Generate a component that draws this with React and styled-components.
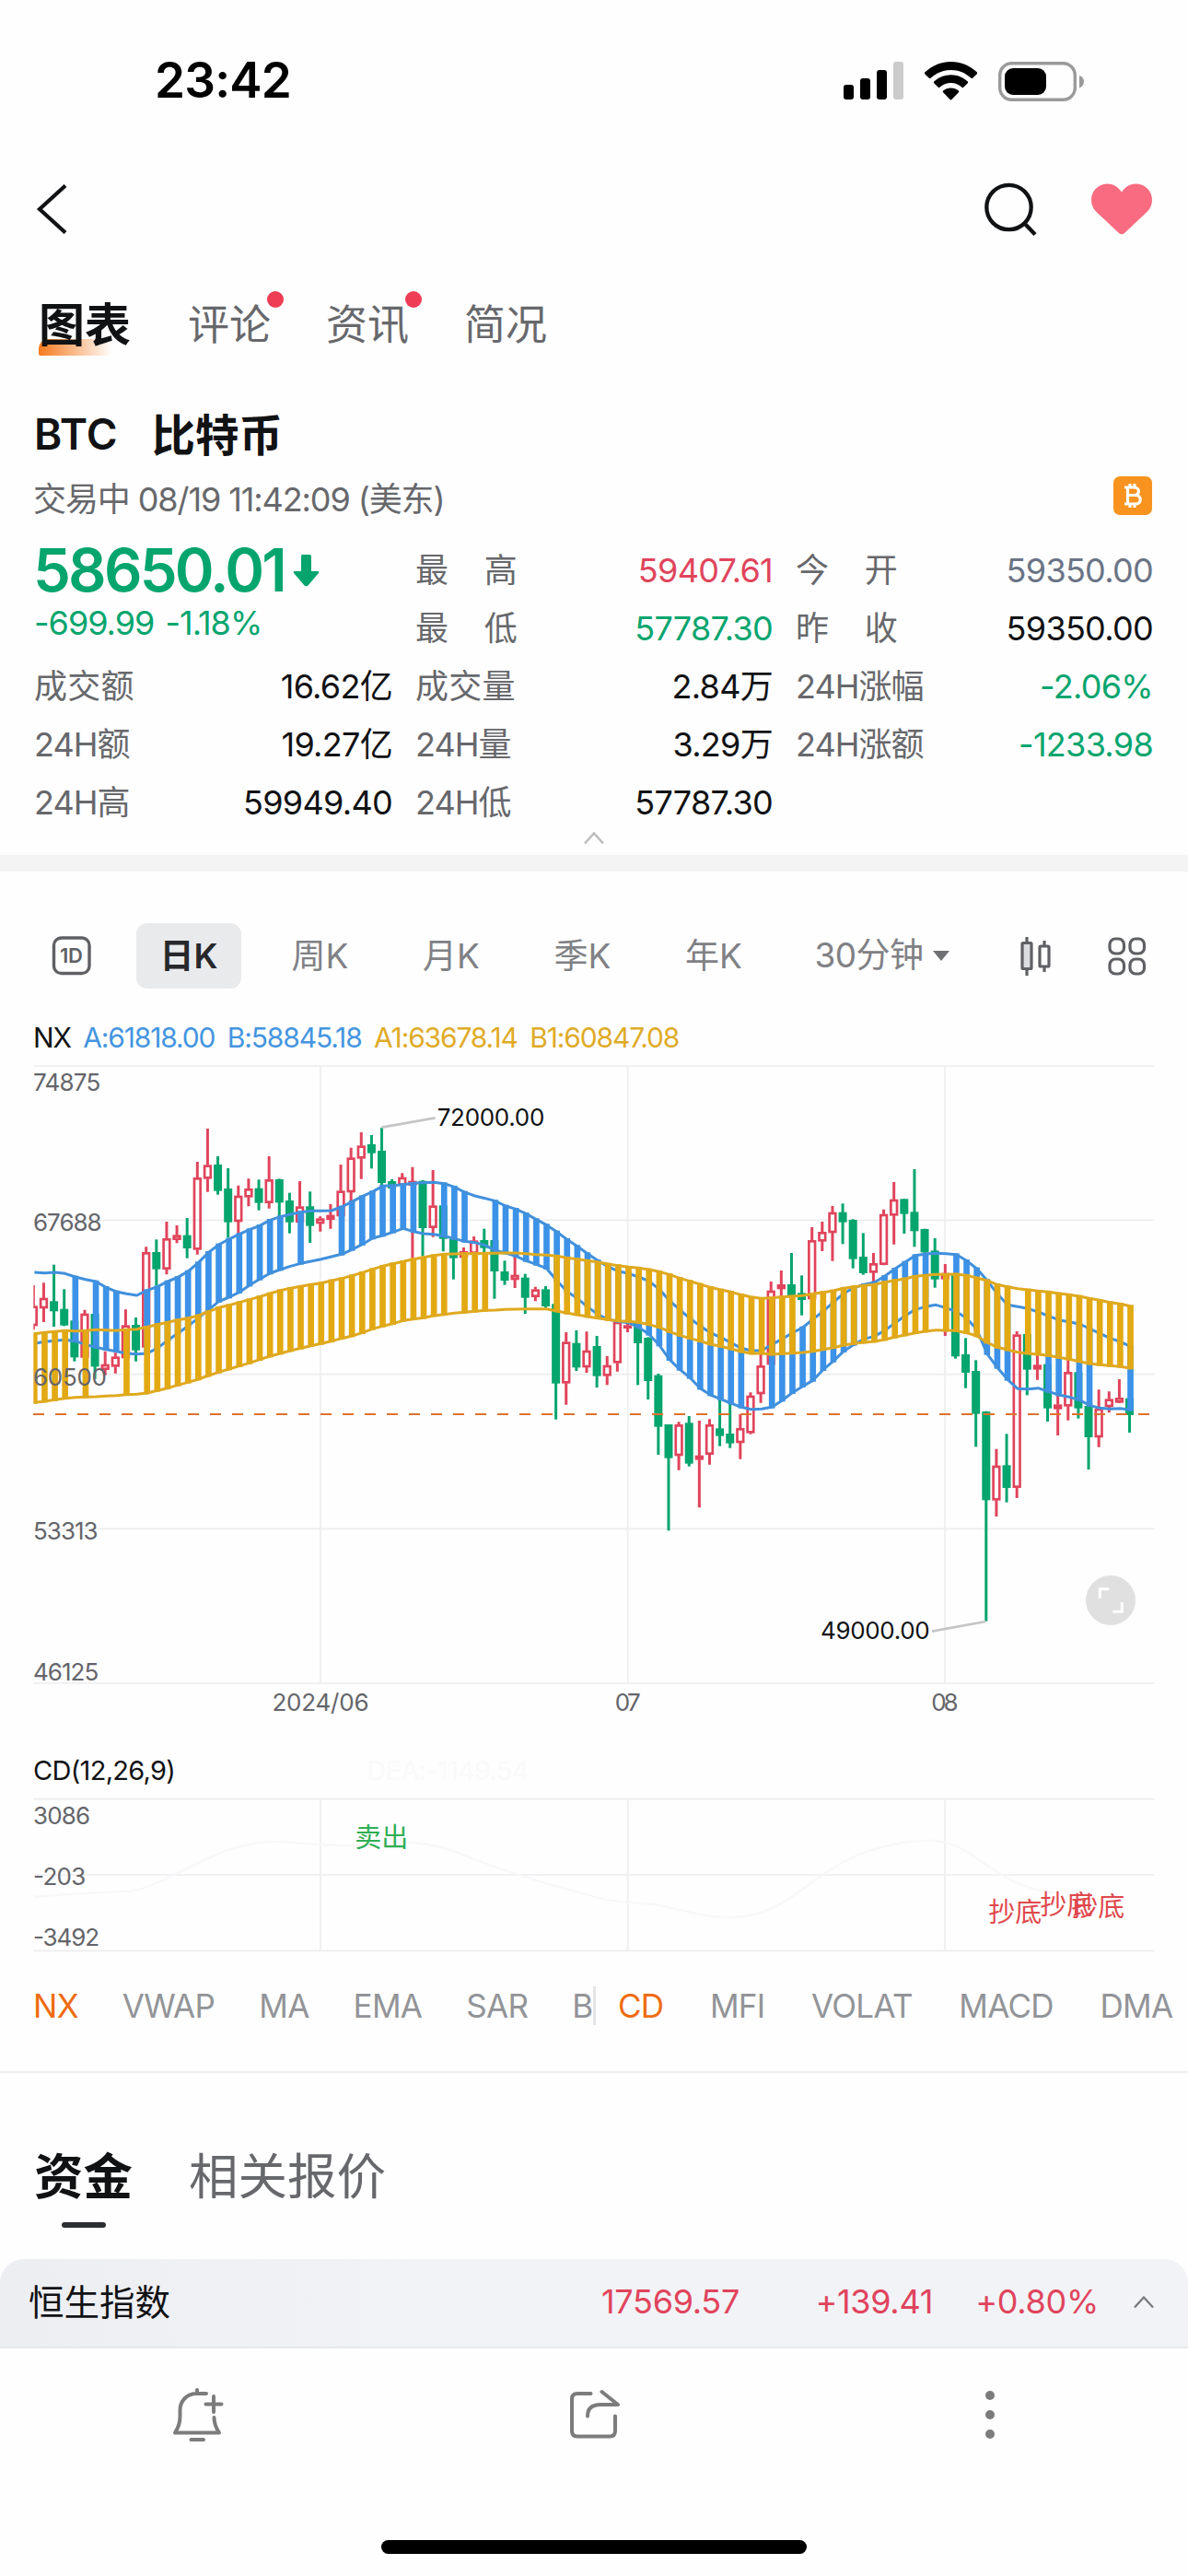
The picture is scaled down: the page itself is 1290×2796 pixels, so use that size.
import React from 'react'
import styled, {createGlobalStyle} from 'styled-components'

const RED = '#e0445c'
const GREEN = '#06a56e'
const BLUE = '#3b92e8'
const GOLD = '#e2a912'

const GlobalStyle = createGlobalStyle`
  body {
    margin: 0;
    background: #fefefe;
    color: #111214;
    font-family: Inter, "Noto Sans CJK SC", sans-serif;
    line-height: 1.2;
    -webkit-font-smoothing: antialiased;
  }
  svg { display: block; }
`

const Screen = styled.div`
  width: 1290px;
  height: 2796px;
  overflow: hidden;
  display: flex;
  flex-direction: column;
`

const StatusBar = styled.div`
  height: 176px;
  box-sizing: border-box;
  padding: 0 113px 0 168px;
  display: flex;
  align-items: center;
  justify-content: space-between;
`

const Clock = styled.span`
  font-size: 53px;
  font-weight: 600;
  letter-spacing: -0.8px;
  color: #000;
`

const StatusIcons = styled.div`
  display: flex;
  align-items: center;
  gap: 23px;
`

const NavBar = styled.div`
  height: 102px;
  padding: 0 39px 0 37px;
  display: flex;
  align-items: center;
  justify-content: space-between;
`

const NavActions = styled.div`
  display: flex;
  align-items: center;
  gap: 56px;
`

const PageTabs = styled.div`
  height: 150px;
  padding-left: 42px;
  display: flex;
  align-items: center;
  gap: 60px;
`

const PageTab = styled.div`
  position: relative;
  font-size: ${p => p.$active ? 50 : 45}px;
  font-weight: ${p => p.$active ? 700 : 400};
  line-height: 60px;
  color: ${p => p.$active ? '#111214' : '#67686c'};
  margin-right: ${p => p.$active ? 2 : 0}px;
`

const TabGlow = styled.i`
  position: absolute;
  left: 0;
  bottom: -3px;
  width: 80px;
  height: 18px;
  border-radius: 10px 0 0 2px;
  background: linear-gradient(90deg, #f57a1e, rgba(245, 122, 30, .45) 55%, rgba(245, 122, 30, 0));
`

const TabText = styled.span`
  position: relative;
`

const Dot = styled.i`
  position: absolute;
  top: -7px;
  right: -14px;
  width: 18px;
  height: 18px;
  border-radius: 50%;
  background: #ef3d55;
`

const TitleRow = styled.div`
  height: 88px;
  padding-left: 37px;
  display: flex;
  align-items: center;
  gap: 37px;
  font-size: 46px;
  font-weight: 600;
`

const CoinName = styled.span`
  font-size: 47.5px;
`

const SessionRow = styled.div`
  height: 54px;
  padding: 0 39px 0 36px;
  display: flex;
  align-items: center;
  justify-content: space-between;
  font-size: 36px;
  letter-spacing: -1.1px;
  color: #67686c;

  svg { margin-bottom: 10px; }
`

const Quote = styled.div`
  padding: 18px 37px 0 37px;
  display: grid;
  grid-template-columns: 389px 388px 388px;
  grid-auto-rows: 63px;
  column-gap: 25px;
`

const LastPrice = styled.div`
  grid-row: span 2;
`

const Price = styled.div`
  margin-left: -1px;
  display: flex;
  align-items: center;
  gap: 9px;
  line-height: 62px;
  font-size: 65px;
  font-weight: 600;
  letter-spacing: -2.8px;
  color: ${GREEN};
`

const Change = styled.div`
  line-height: 53px;
  font-size: 36px;
  letter-spacing: -1px;
  word-spacing: 3px;
  color: ${GREEN};
`

const Stat = styled.div`
  display: flex;
  align-items: center;
  justify-content: space-between;
  font-size: 36px;
`

const StatLabel = styled.span`
  display: flex;
  justify-content: space-between;
  min-width: ${p => p.$spread ? '111px' : '0'};
  letter-spacing: ${p => p.$latin ? '-1px' : '0.3px'};
  color: #67686c;
`

const StatValue = styled.span`
  letter-spacing: -0.7px;
  color: ${p => p.$color || '#111214'};
`

const Fold = styled.div`
  height: 25px;
  display: flex;
  justify-content: center;
`

const Band = styled.div`
  height: 18px;
  background: #f4f4f5;
`

const PeriodBar = styled.div`
  margin-top: 56px;
  height: 71px;
  padding: 0 45px 0 56px;
  display: flex;
  align-items: center;
`

const Periods = styled.div`
  flex: 1;
  margin-left: 49px;
  display: flex;
  gap: 28.5px;
`

const Period = styled.div`
  width: 114px;
  height: 71px;
  line-height: 71px;
  border-radius: 12px;
  text-align: center;
  font-size: 37px;
  font-weight: ${p => p.$active ? 600 : 400};
  color: ${p => p.$active ? '#27282b' : '#808185'};
  background: ${p => p.$active ? '#e9eaec' : 'transparent'};
`

const MinutePicker = styled.div`
  margin-left: 24px;
  display: flex;
  align-items: center;
  gap: 11px;
  font-size: 37px;
  letter-spacing: -0.6px;
  color: #808185;
`

const PeriodTools = styled.div`
  display: flex;
  align-items: center;
  gap: 60px;
`

const Legend = styled.div`
  margin: 33px 0 4px;
  padding-left: 36px;
  height: 40px;
  line-height: 40px;
  display: flex;
  gap: 13.5px;
  font-size: 30px;
  letter-spacing: -1.15px;
`

const LegendItem = styled.span`
  color: ${p => p.$color || '#111214'};
`

const SubLegend = styled.div`
  margin-top: 32px;
  padding-left: 36px;
  height: 40px;
  line-height: 40px;
  display: flex;
  gap: 208px;
  font-size: 29px;
  letter-spacing: -0.7px;
`

const Indicators = styled.div`
  height: 110px;
  padding-bottom: 16px;
  border-bottom: 2px solid #efeff0;
  display: flex;
  align-items: center;
`

const IndicatorList = styled.div`
  width: ${p => p.$width}px;
  box-sizing: border-box;
  padding-left: ${p => p.$pad}px;
  display: flex;
  flex: none;
  gap: ${p => p.$gap}px;
  overflow: hidden;
  line-height: 42px;
  font-size: 35px;
`

const Indicator = styled.span`
  flex: none;
  letter-spacing: -0.7px;
  color: ${p => p.$active ? '#ee6c12' : '#929498'};
`

const Divider = styled.i`
  width: 3px;
  height: 42px;
  background: #e4e4e6;
`

const FundTabs = styled.div`
  height: 125px;
  padding: 77px 0 0 37px;
  display: flex;
  gap: 61px;
`

const FundTab = styled.div`
  display: flex;
  flex-direction: column;
  align-items: center;
  line-height: 72px;
  font-size: 53.5px;
  font-weight: ${p => p.$active ? 700 : 400};
  color: ${p => p.$active ? '#111214' : '#67686c'};
`

const Underline = styled.i`
  margin-top: 13px;
  width: 48px;
  height: 6px;
  border-radius: 3px;
  background: #2d2e31;
`

const Ticker = styled.div`
  height: 97px;
  box-sizing: border-box;
  padding: 0 37px 0 31px;
  display: flex;
  align-items: center;
  border-bottom: 2px solid #e8e9ea;
  border-radius: 26px 26px 0 0;
  background: linear-gradient(90deg, #eceef2, #f2f3f7 35%);
  font-size: 38.5px;
`

const TickerName = styled.span`
  flex: 1;
`

const TickerValue = styled.span`
  width: ${p => p.$width}px;
  padding-bottom: 1px;
  text-align: right;
  font-size: 36px;
  letter-spacing: -0.3px;
  color: ${RED};

  & + svg { margin-left: 38px; }
`

const ActionBar = styled.div`
  height: 144px;
  display: grid;
  grid-template-columns: repeat(3, 1fr);
  align-items: center;
  justify-items: center;
`

const HomeIndicator = styled.div`
  margin: 64px auto 0;
  width: 462px;
  height: 15px;
  border-radius: 8px;
  background: #000;
`

// chart space is three units per pixel
const STEP = 33.37
const candleX = i => 109 + STEP * i

// [rising, high, body top, body bottom, low]
const candles = [
    [1, 735, 803, 867, 880], [1, 727, 777, 810, 855], [0, 668, 787, 820, 870], [0, 748, 812, 866, 868],
    [0, 850, 850, 970, 983], [1, 815, 828, 970, 972], [0, 828, 828, 1000, 1040], [1, 950, 993, 1010, 1028],
    [1, 955, 968, 1000, 1022], [1, 814, 866, 972, 975], [0, 840, 864, 947, 983], [1, 610, 628, 937, 940],
    [0, 586, 627, 683, 735], [1, 528, 583, 683, 700], [1, 540, 572, 587, 598], [0, 516, 572, 615, 647],
    [1, 333, 385, 619, 635], [1, 225, 344, 388, 431], [0, 315, 342, 428, 440], [0, 354, 420, 530, 580],
    [1, 410, 444, 528, 570], [1, 388, 421, 448, 478], [0, 391, 419, 467, 491], [1, 315, 391, 467, 485],
    [0, 388, 390, 466, 510], [0, 434, 459, 530, 566], [1, 396, 479, 530, 532], [0, 430, 478, 542, 597],
    [1, 511, 518, 534, 560], [1, 471, 507, 521, 551], [1, 342, 428, 510, 512], [1, 287, 320, 432, 465],
    [1, 237, 281, 322, 389], [0, 246, 276, 305, 355], [0, 222, 297, 402, 410], [0, 390, 396, 420, 422],
    [1, 370, 384, 410, 412], [1, 350, 396, 410, 650], [0, 393, 395, 549, 640], [1, 360, 476, 548, 578],
    [0, 474, 475, 584, 625], [0, 580, 585, 647, 716], [1, 612, 625, 645, 648], [1, 576, 590, 632, 634],
    [0, 551, 588, 614, 630], [0, 588, 588, 690, 779], [0, 655, 690, 720, 734], [1, 640, 702, 717, 744],
    [0, 698, 710, 776, 828], [1, 740, 749, 773, 787], [0, 738, 748, 804, 808], [0, 795, 796, 1055, 1172],
    [1, 888, 920, 1054, 1124], [0, 882, 923, 1003, 1014], [1, 886, 948, 1002, 1020], [0, 900, 933, 1031, 1068],
    [1, 966, 996, 1030, 1060], [1, 850, 855, 988, 1016], [1, 856, 866, 872, 888], [0, 856, 858, 924, 1060],
    [0, 904, 906, 1047, 1107], [0, 1023, 1028, 1196, 1287], [0, 1188, 1188, 1298, 1534], [1, 1180, 1189, 1290, 1337],
    [0, 1161, 1183, 1316, 1325], [1, 1176, 1290, 1303, 1459], [1, 1171, 1189, 1286, 1319], [0, 1105, 1201, 1226, 1259],
    [0, 1120, 1218, 1250, 1265], [1, 1155, 1201, 1248, 1301], [1, 1084, 1095, 1216, 1220], [1, 955, 997, 1089, 1118],
    [1, 723, 753, 993, 995], [1, 687, 733, 747, 770], [0, 630, 732, 770, 772], [0, 703, 760, 783, 833],
    [1, 546, 589, 780, 782], [1, 528, 562, 592, 624], [1, 477, 498, 564, 656], [0, 469, 497, 530, 601],
    [0, 520, 522, 650, 680], [0, 565, 642, 696, 701], [1, 630, 664, 694, 725], [1, 488, 504, 668, 670],
    [1, 399, 456, 508, 602], [0, 454, 454, 503, 567], [0, 357, 496, 559, 610], [0, 551, 552, 628, 630],
    [0, 582, 622, 716, 743], [1, 666, 696, 715, 900], [0, 696, 696, 967, 974], [0, 907, 960, 1020, 1070],
    [0, 979, 1014, 1154, 1261], [0, 1145, 1146, 1435, 1829], [1, 1268, 1323, 1435, 1488], [0, 1219, 1321, 1395, 1442],
    [1, 885, 896, 1394, 1428], [0, 894, 894, 1010, 1093], [1, 961, 995, 1009, 1043], [0, 992, 992, 1136, 1179],
    [1, 1089, 1124, 1138, 1224], [1, 974, 1018, 1129, 1175], [0, 1018, 1018, 1136, 1169], [0, 1127, 1128, 1230, 1335],
    [1, 1075, 1137, 1230, 1262], [1, 1081, 1106, 1131, 1150], [1, 1041, 1102, 1117, 1119], [0, 1103, 1103, 1158, 1215],
]

const blueBand = {
    upper: [693, 695, 693, 697, 708, 716, 723, 742, 756, 763, 768, 752, 740, 723, 709, 690, 662, 628, 603, 585,
        569, 554, 541, 523, 512, 504, 497, 493, 493, 492, 480, 463, 446, 431, 412, 410, 407, 403, 401, 400,
        404, 415, 432, 444, 452, 461, 477, 487, 502, 521, 539, 561, 586, 608, 632, 655, 675, 689, 697, 708,
        722, 748, 785, 815, 843, 868, 890, 905, 922, 940, 948, 948, 928, 910, 890, 873, 846, 820, 790, 762,
        743, 733, 726, 706, 682, 660, 638, 633, 631, 632, 635, 655, 681, 719, 763, 799, 805, 811, 822, 835,
        848, 854, 861, 876, 892, 907, 919, 934],
    lower: [925, 919, 916, 913, 917, 928, 937, 944, 950, 957, 959, 957, 940, 915, 892, 868, 842, 815, 788, 774,
        758, 735, 715, 696, 684, 673, 664, 657, 650, 642, 634, 619, 602, 582, 573, 562, 550, 560, 567, 569,
        575, 583, 592, 596, 605, 622, 630, 640, 655, 667, 680, 720, 755, 778, 805, 830, 846, 853, 857, 872,
        895, 930, 977, 1009, 1036, 1071, 1092, 1106, 1119, 1132, 1139, 1138, 1132, 1110, 1085, 1064, 1045, 1010, 982, 950,
        928, 910, 901, 883, 858, 835, 814, 805, 799, 809, 821, 842, 879, 958, 1003, 1042, 1072, 1073, 1070, 1081,
        1092, 1099, 1108, 1126, 1135, 1138, 1136, 1141],
    gaps: [0, 1, 2, 3, 5, 9, 10, 25, 27, 28, 29, 38, 39, 43, 44, 70, 71, 88, 89, 96, 97, 98, 101, 104, 105, 106],
}

const goldBand = {
    upper: [893, 889, 886, 883, 884, 883, 880, 881, 883, 880, 878, 871, 863, 856, 848, 842, 834, 821, 808, 800,
        791, 782, 772, 762, 752, 745, 739, 733, 728, 720, 713, 704, 694, 683, 673, 665, 658, 650, 644, 638,
        634, 633, 632, 632, 631, 631, 630, 630, 632, 635, 637, 640, 646, 650, 655, 660, 666, 671, 676, 679,
        684, 691, 700, 712, 722, 732, 742, 750, 757, 766, 774, 778, 776, 773, 771, 769, 763, 758, 753, 745,
        740, 736, 733, 725, 719, 714, 706, 703, 700, 700, 699, 703, 711, 720, 733, 740, 746, 750, 754, 757,
        762, 766, 771, 778, 784, 791, 796, 803],
    lower: [1117, 1113, 1108, 1103, 1100, 1099, 1098, 1096, 1094, 1091, 1090, 1086, 1078, 1070, 1060, 1051, 1041, 1029, 1018, 1008,
        998, 988, 977, 966, 957, 948, 940, 932, 925, 917, 908, 900, 890, 877, 868, 860, 850, 845, 841, 834,
        830, 826, 823, 820, 817, 816, 814, 813, 812, 812, 812, 819, 826, 831, 837, 842, 847, 851, 853, 856,
        863, 872, 886, 898, 908, 917, 927, 934, 942, 951, 957, 957, 960, 958, 956, 954, 950, 944, 938, 930,
        925, 921, 918, 912, 904, 897, 890, 885, 881, 882, 883, 890, 900, 921, 937, 945, 953, 957, 960, 964,
        970, 976, 983, 990, 994, 997, 1000, 1005],
    gaps: [4, 6, 7, 8, 10, 41, 45, 46, 47, 48, 49, 50, 75, 88, 96],
}

const MONTHS = [[1044, '2024/06', 315], [2045, '07', 84], [3078, '08', 88]]

const toPoints = ys => ys.map((y, i) => `${candleX(i) + 3},${y}`).join(' ')

const Ribbon = ({band, fill, line}) => (
    <g>
        {band.upper.map((y, i) => !band.gaps.includes(i) && (
            <rect key={i} x={candleX(i) - 7} y={y - 4} width={20} height={band.lower[i] - y + 8} fill={fill}/>
        ))}
        <polyline points={toPoints(band.upper)} fill="none" stroke={line} strokeWidth={9} strokeLinejoin="round"/>
        <polyline points={toPoints(band.lower)} fill="none" stroke={line} strokeWidth={9} strokeLinejoin="round"/>
    </g>
)

const Candle = ({x, data: [rising, high, top, bottom, low]}) => rising ? (
    <g stroke={RED} strokeWidth={9} fill="none">
        <path d={`M${x} ${high}V${top}M${x} ${bottom}V${low}`}/>
        <rect x={x - 10} y={top + 3} width={20} height={Math.max(bottom - top - 6, 3)} strokeWidth={8}/>
    </g>
) : (
    <g fill={GREEN}>
        <rect x={x - 4.5} y={high} width={9} height={low - high}/>
        <rect x={x - 13.5} y={top} width={27} height={bottom - top}/>
    </g>
)

const AxisText = ({x, y, w, children, ...rest}) => (
    <text x={x} y={y} textLength={w} fontSize={78} fill="#64656a" {...rest}>{children}</text>
)

const PriceChart = () => (
    <svg width="1290" height="720" viewBox="0 0 3870 2160">
        <defs>
            <clipPath id="plot"><rect x="109" y="20" width="3650" height="2012"/></clipPath>
        </defs>
        <g stroke="#ededef" strokeWidth={5}>
            {[21, 523, 1025, 1528, 2031].map(y => <line key={y} x1="109" x2="3760" y1={y} y2={y}/>)}
            {MONTHS.map(([x]) => <line key={x} x1={x} x2={x} y1="21" y2="2031"/>)}
        </g>
        <g clipPath="url(#plot)">
            {candles.map((c, i) => <Candle key={i} x={candleX(i)} data={c}/>)}
            <Ribbon band={blueBand} fill={BLUE} line="#4190dc"/>
            <Ribbon band={goldBand} fill={GOLD} line="#dfa91f"/>
        </g>
        <line x1="108" x2="3745" y1="1155" y2="1155" stroke="#de722c" strokeWidth={6} strokeDasharray="36 36"/>
        <path d="M1243 221L1418 190M3036 1862L3211 1830" stroke="#c4c5c7" strokeWidth={8}/>
        <AxisText x={1424} y={217} w={350} fill="#111214">72000.00</AxisText>
        <AxisText x={2673} y={1888} w={356} fill="#111214">49000.00</AxisText>
        <AxisText x={108} y={102} w={220}>74875</AxisText>
        <AxisText x={108} y={559} w={224}>67688</AxisText>
        <AxisText x={108} y={1062} w={240}>60500</AxisText>
        <AxisText x={108} y={1564} w={212}>53313</AxisText>
        <AxisText x={108} y={2022} w={214}>46125</AxisText>
        {MONTHS.map(([x, label, w]) => (
            <AxisText key={label} x={x - w / 2} y={2122} w={w}>{label}</AxisText>
        ))}
        <circle cx="3618" cy="1761" r="81" fill="#e0e0e0"/>
        <path d="M3583 1755V1724H3613M3655 1767V1798H3625" fill="none" stroke="#fff" strokeWidth={9}/>
    </svg>
)

const Signal = styled.text`
  font-size: 87px;
  font-family: "Noto Sans CJK SC", sans-serif;
`

const CdChart = () => (
    <svg width="1290" height="180" viewBox="0 0 3870 540">
        <g stroke="#ededef" strokeWidth={5}>
            {[32, 279, 526].map(y => <line key={y} x1="109" x2="3760" y1={y} y2={y}/>)}
            {MONTHS.map(([x]) => <line key={x} x1={x} x2={x} y1="32" y2="526"/>)}
        </g>
        <path
            d="M110 351C200 342 330 336 430 332C580 300 700 171 900 171C1000 176 1060 186 1180 183C1300 165 1400 170 1500 210C1650 270 1780 310 1920 345C1990 372 2080 366 2150 378C2230 396 2300 417 2370 417C2560 420 2620 290 2790 216C2900 175 2960 168 3040 168C3180 172 3230 320 3450 339"
            fill="none" stroke="#f8f8fa" strokeWidth={7}/>
        <AxisText x={108} y={113} w={186}>3086</AxisText>
        <AxisText x={108} y={311} w={172}>-203</AxisText>
        <AxisText x={108} y={509} w={216}>-3492</AxisText>
        <Signal x={1156} y={188} fill="#2fae55">卖出</Signal>
        <g fill="#e0484c">
            <Signal x={3220} y={431}>抄底</Signal>
            <Signal x={3388} y={408}>抄底</Signal>
            <Signal x={3490} y={413}>抄底</Signal>
        </g>
    </svg>
)

const SignalIcon = () => (
    <svg width="65" height="42" viewBox="0 0 65 42">
        <rect x="0" y="25" width="11" height="16" rx="3"/>
        <rect x="18" y="18" width="11" height="23" rx="3"/>
        <rect x="36" y="9" width="11" height="32" rx="3"/>
        <rect x="54" y="0" width="11" height="41" rx="3" fill="#cbcbcb"/>
    </svg>
)

const WifiIcon = () => (
    <svg width="57" height="42" viewBox="0 0 57 42">
        <path d="M28.5 0C39.500 0 49.500 4.300 57 11.500C57.300 12 57.300 12.700 56.800 13.200L52.200 17.800C51.700 18.300 51 18.300 50.500 17.800C44.700 12.200 37 8.900 28.500 8.900C20 8.900 12.300 12.200 6.500 17.800C6 18.300 5.300 18.300 4.800 17.800L.200 13.200C-.2 12.700-.2 12 .200 11.500C7.500 4.300 17.500 0 28.500 0Z"/>
        <path d="M28.500 14.200C35.600 14.200 42 17 46.800 21.500C47.300 22 47.300 22.700 46.800 23.200L42.200 27.800C41.700 28.300 41 28.300 40.500 27.800C37.300 24.900 33.100 23.100 28.500 23.100C23.900 23.100 19.700 24.900 16.500 27.800C16 28.300 15.300 28.300 14.800 27.800L10.200 23.200C9.700 22.700 9.700 22 10.200 21.500C15 17 21.400 14.200 28.500 14.200Z"/>
        <path d="M28.500 28.600C31.700 28.600 34.600 29.700 36.900 31.500C37.400 32 37.400 32.700 36.900 33.200L29.400 41C28.900 41.500 28.100 41.500 27.600 41L20.100 33.200C19.600 32.700 19.600 32 20.100 31.500C22.400 29.700 25.300 28.600 28.500 28.600Z"/>
    </svg>
)

const BatteryIcon = () => (
    <svg width="93" height="43" viewBox="0 0 93 43">
        <rect x="1.700" y="1.700" width="81.600" height="39.600" rx="13" fill="none" stroke="#9a9a9a" strokeWidth="3.400"/>
        <rect x="7" y="7" width="45" height="29" rx="9"/>
        <path d="M88 15C91.500 16 93 19 93 21.500S91.500 27 88 28.500Z" fill="#9a9a9a"/>
    </svg>
)

const BackIcon = () => (
    <svg width="36" height="54" viewBox="0 0 36 54" fill="none" stroke="#111214" strokeWidth="4.200">
        <path d="M34 1.500L6 27L34 52.500"/>
    </svg>
)

const SearchIcon = () => (
    <svg width="60" height="60" viewBox="0 0 60 60" fill="none" stroke="#111214" strokeWidth="4.300">
        <circle cx="26.500" cy="28" r="24.200"/>
        <path d="M43 45L55 57.500"/>
    </svg>
)

const HeartIcon = () => (
    <svg width="66" height="56" viewBox="0 0 66 56" fill="#f96b80">
        <path d="M33 9.500C37 3.500 43 .300 49 .500C58.500 .800 66 8.500 66 18C66 23 64.300 27 61 30.500L36 54C34 55.800 32 55.800 30 54L5 30.500C1.700 27 0 23 0 18C0 8.500 7.500 .800 17 .500C23 .300 29 3.500 33 9.500Z"/>
    </svg>
)

const BitcoinBadge = () => (
    <svg width="42" height="42" viewBox="0 0 42 42">
        <rect width="42" height="42" rx="7" fill="#f7931e"/>
        <path d="M12 12H22.500C29 12 29 20.500 23 20.500H15.500M15.500 20.500H24C31 20.500 31 30 24 30H12M15.500 12V30M18 8V12M23 8V12M18 30V34M23 30V34"
              fill="none" stroke="#fff" strokeWidth="3.200"/>
    </svg>
)

const DownArrow = () => (
    <svg width="29" height="35" viewBox="0 0 29 35" fill={GREEN}>
        <path d="M10 0H18Q20 0 20 2V18H27.500Q29 18.500 28 20L16.500 33.500Q14.500 35 12.500 33.500L1 20Q0 18.500 1.500 18H9V2Q9 0 10 0Z"/>
    </svg>
)

const ChevronUp = ({color, width = 2.6}) => (
    <svg width="22" height="15" viewBox="0 0 22 15" fill="none" stroke={color} strokeWidth={width}>
        <path d="M1 12.500L11 1.500L21 12.500"/>
    </svg>
)

const DayIcon = () => (
    <svg width="43" height="43" viewBox="0 0 43 43">
        <rect x="2.500" y="2" width="38.500" height="38.500" rx="8" fill="none" stroke="#5f6064" strokeWidth="3.400"/>
        <text x="21.500" y="28.500" textAnchor="middle" fontSize="22" fontWeight="600" textLength="25" fill="#5f6064">1D</text>
    </svg>
)

const CandleIcon = () => (
    <svg width="36" height="42" viewBox="0 0 36 42" stroke="#5f6064" strokeWidth="3.200">
        <rect x="3" y="6.500" width="10" height="28" rx="1" fill="#dcdddf"/>
        <rect x="22" y="10" width="10" height="22" rx="1" fill="none"/>
        <path d="M8 0V6.500M8 34.500V42M27 4V10M27 32V38"/>
    </svg>
)

const GridIcon = () => (
    <svg width="42" height="42" viewBox="0 0 42 42" fill="none" stroke="#5f6064" strokeWidth="3.200">
        <rect x="2" y="2" width="15.500" height="16" rx="6"/>
        <rect x="24" y="2" width="15.500" height="16" rx="6"/>
        <rect x="2" y="24" width="15.500" height="16" rx="6"/>
        <rect x="24" y="24" width="15.500" height="16" rx="6"/>
    </svg>
)

const BellIcon = () => (
    <svg width="56" height="62" viewBox="0 0 56 62" fill="none" stroke="#7c7c7c" strokeWidth="4" strokeLinecap="round" strokeLinejoin="round">
        <path d="M37 8H26.500C16 8 8.500 16 8.500 26V33C8.500 41 6 46 3 50.500H51C48 46 45.500 41 45.500 34M27 8V4M20.500 58H34M45 11V28M36.500 19.500H53.500"/>
    </svg>
)

const ShareIcon = () => (
    <svg width="56" height="56" viewBox="0 0 56 56" fill="none" stroke="#7c7c7c" strokeWidth="4" strokeLinecap="round" strokeLinejoin="round">
        <path d="M24.500 5H10Q4 5 4 11V45.500Q4 51.500 10 51.500H45Q51 51.500 51 45.500V29.500M36.500 3L54 17H35Q21 17 21 29.500"/>
    </svg>
)

const MoreIcon = () => (
    <svg width="12" height="54" viewBox="0 0 12 54" fill="#7c7c7c">
        <circle cx="6" cy="6" r="5"/>
        <circle cx="6" cy="27" r="5"/>
        <circle cx="6" cy="48" r="5"/>
    </svg>
)

const stats = [
    ['最高', '59407.61', RED], ['今开', '59350.00', '#6a7486'],
    ['最低', '57787.30', GREEN], ['昨收', '59350.00'],
    ['成交额', '16.62亿'], ['成交量', '2.84万'], ['24H涨幅', '-2.06%', GREEN],
    ['24H额', '19.27亿'], ['24H量', '3.29万'], ['24H涨额', '-1233.98', GREEN],
    ['24H高', '59949.40'], ['24H低', '57787.30'],
]

const App = () => (
    <Screen>
        <GlobalStyle/>
        <StatusBar>
            <Clock>23:42</Clock>
            <StatusIcons><SignalIcon/><WifiIcon/><BatteryIcon/></StatusIcons>
        </StatusBar>
        <NavBar>
            <BackIcon/>
            <NavActions><SearchIcon/><HeartIcon/></NavActions>
        </NavBar>
        <PageTabs>
            <PageTab $active><TabGlow/><TabText>图表</TabText></PageTab>
            <PageTab>评论<Dot/></PageTab>
            <PageTab>资讯<Dot/></PageTab>
            <PageTab>简况</PageTab>
        </PageTabs>
        <TitleRow><span>BTC</span><CoinName>比特币</CoinName></TitleRow>
        <SessionRow>
            <span>交易中 08/19 11:42:09 (美东)</span>
            <BitcoinBadge/>
        </SessionRow>
        <Quote>
            <LastPrice>
                <Price>58650.01<DownArrow/></Price>
                <Change>-699.99 -1.18%</Change>
            </LastPrice>
            {stats.map(([label, value, color]) => (
                <Stat key={label}>
                    <StatLabel $spread={label.length === 2} $latin={label.startsWith('24H')}>
                        {label.length === 2 ? label.split('').map(c => <span key={c}>{c}</span>) : label}
                    </StatLabel>
                    <StatValue $color={color}>{value}</StatValue>
                </Stat>
            ))}
        </Quote>
        <Fold><ChevronUp color="#bdbdbf"/></Fold>
        <Band/>
        <PeriodBar>
            <DayIcon/>
            <Periods>
                <Period $active>日K</Period>
                {['周K', '月K', '季K', '年K'].map(p => <Period key={p}>{p}</Period>)}
                <MinutePicker>
                    30分钟
                    <svg width="18" height="11" viewBox="0 0 18 11"><path d="M0 0H18L9 11Z" fill="#6f7074"/></svg>
                </MinutePicker>
            </Periods>
            <PeriodTools><CandleIcon/><GridIcon/></PeriodTools>
        </PeriodBar>
        <Legend>
            <LegendItem>NX</LegendItem>
            <LegendItem $color="#4495e0">A:61818.00</LegendItem>
            <LegendItem $color="#4495e0">B:58845.18</LegendItem>
            <LegendItem $color="#dfab27">A1:63678.14</LegendItem>
            <LegendItem $color="#dfab27">B1:60847.08</LegendItem>
        </Legend>
        <PriceChart/>
        <SubLegend>
            <LegendItem>CD(12,26,9)</LegendItem>
            <LegendItem $color="#fafafb">DEA:-1149.54</LegendItem>
        </SubLegend>
        <CdChart/>
        <Indicators>
            <IndicatorList $width={644} $pad={36} $gap={48}>
                {['NX', 'VWAP', 'MA', 'EMA', 'SAR', 'BOLL'].map(n => <Indicator key={n} $active={n === 'NX'}>{n}</Indicator>)}
            </IndicatorList>
            <Divider/>
            <IndicatorList $width={643} $pad={24} $gap={50.5}>
                {['CD', 'MFI', 'VOLAT', 'MACD', 'DMA'].map(n => <Indicator key={n} $active={n === 'CD'}>{n}</Indicator>)}
            </IndicatorList>
        </Indicators>
        <FundTabs>
            <FundTab $active>资金<Underline/></FundTab>
            <FundTab>相关报价</FundTab>
        </FundTabs>
        <Ticker>
            <TickerName>恒生指数</TickerName>
            <TickerValue $width={160}>17569.57</TickerValue>
            <TickerValue $width={210}>+139.41</TickerValue>
            <TickerValue $width={180}>+0.80%</TickerValue>
            <ChevronUp color="#77787c" width={2.2}/>
        </Ticker>
        <ActionBar><BellIcon/><ShareIcon/><MoreIcon/></ActionBar>
        <HomeIndicator/>
    </Screen>
)

export default App
